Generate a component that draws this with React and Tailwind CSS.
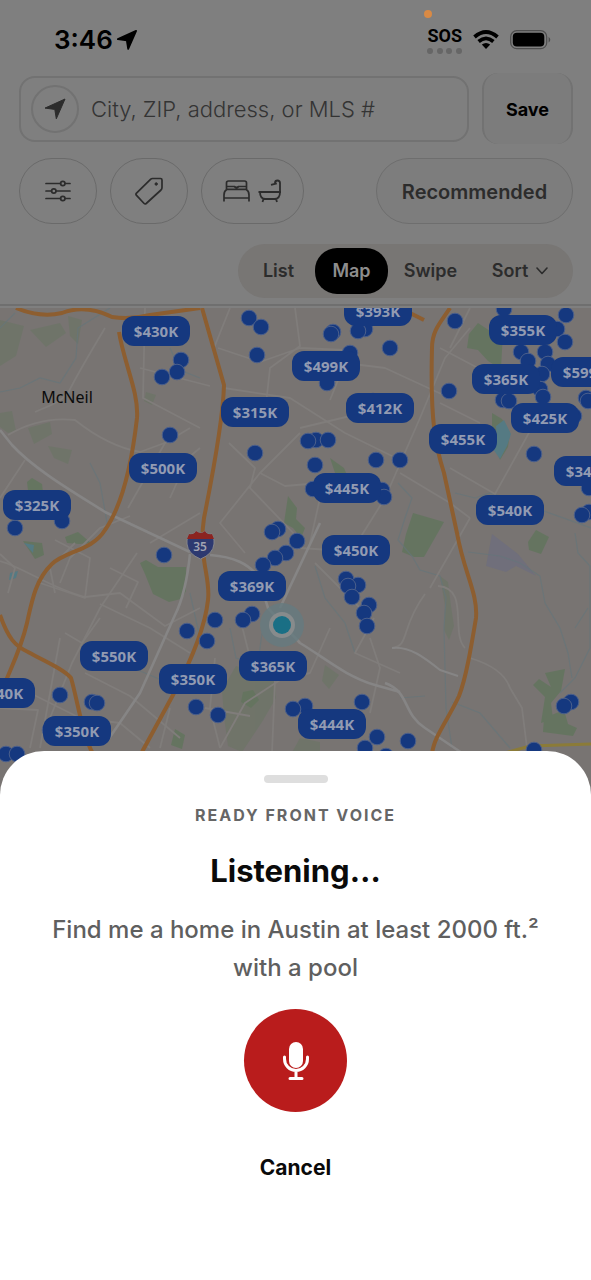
import React from 'react'

const pins = [
  { label: '$393K', x: 378, y: 3 },
  { label: '$430K', x: 156, y: 23 },
  { label: '$355K', x: 523, y: 22 },
  { label: '$499K', x: 326, y: 58 },
  { label: '$365K', x: 506, y: 71 },
  { label: '$599K', x: 585, y: 64 },
  { label: '$412K', x: 380, y: 100 },
  { label: '$315K', x: 255, y: 104 },
  { label: '$425K', x: 545, y: 110 },
  { label: '$455K', x: 463, y: 131 },
  { label: '$500K', x: 163, y: 160 },
  { label: '$349K', x: 588, y: 163 },
  { label: '$445K', x: 347, y: 180 },
  { label: '$325K', x: 37, y: 197 },
  { label: '$540K', x: 510, y: 202 },
  { label: '$450K', x: 356, y: 242 },
  { label: '$369K', x: 252, y: 278 },
  { label: '$550K', x: 114, y: 348 },
  { label: '$365K', x: 273, y: 358 },
  { label: '$350K', x: 193, y: 371 },
  { label: '$340K', x: 1, y: 385 },
  { label: '$444K', x: 332, y: 416 },
  { label: '$350K', x: 77, y: 423 },
]

const dots = [
  [181, 52], [177, 64], [162, 69], [170, 127], [62, 213], [15, 220],
  [249, 10], [261, 19], [257, 47], [333, 24], [331, 26], [365, 21], [358, 23],
  [390, 40], [350, 45], [327, 75], [373, 93], [316, 132], [308, 133], [328, 132],
  [255, 145], [315, 157], [376, 152], [400, 152], [313, 181], [382, 182], [384, 189],
  [278, 221], [272, 224], [455, 13], [504, 1], [566, 7], [557, 21], [565, 34],
  [521, 44], [528, 53], [545, 44], [548, 56], [542, 66], [540, 81], [543, 89],
  [503, 92], [509, 93], [535, 110], [550, 103], [574, 108], [534, 146], [586, 90], [588, 93],
  [589, 180], [589, 204], [582, 207], [449, 83], [164, 247], [187, 323], [60, 387],
  [92, 394], [97, 395], [196, 399], [218, 407], [6, 446], [17, 446], [50, 422],
  [297, 233], [286, 245], [275, 250], [263, 257], [252, 306], [243, 312],
  [215, 312], [207, 333], [346, 271], [358, 277], [348, 278], [352, 289],
  [369, 297], [364, 305], [367, 318], [362, 394], [305, 398], [293, 401],
  [377, 429], [365, 440], [386, 448], [408, 433], [571, 394], [564, 398], [534, 442],
]

const parks = [
  'M478 15l12 8h13l-2 38-13-8-10-11-11-2 2-14z',
  'M492 105l10 6 8 14-2 14-8 13-8-22z',
  'M140 255l6-3 12 7h28v24l-5 8-12 3-16-8-8-20z',
  'M413 205l31 9-20 35h-10l-12-5 4-18z',
  'M536 222l13 7-8 17-12-4-1-8z',
  'M288 188l9 12-1 11 9 9-4 10-8-10-9-5z',
  'M330 150l14 10 5 12-6 8-7-12z',
  'M27 174l5-4 10 6 1 9-6 3-9-6z',
  'M23 233l19 2 2 12-9 4z',
  'M65 229l13-5 13 11-12 1-12-1z',
  'M175 421l10 6-3 14-11-4z',
  'M262 254l7-5 2 8-9 4z',
  'M545 365l20-4-4 22-10 12 2 16-12 4 4-26-12-12 6-6 12 8z',
  'M544 410l20-8 4 14 9 4-4 8-30-4z',
  'M243 384l10-2 6 10-8 8-10-6z',
]

// larger, fainter patches of greenery
const meadows = [
  'M0 12l24 6-8 30-16 10z',
  'M30 22l30-7 6 10-20 14z',
  'M68 8l14 4-4 24-8-8z',
  'M28 120l22-6 2 12-18 10z',
  'M48 138l24 4-4 14-14-6z',
  'M0 105l12-2 4 20-8 2-8-6z',
  'M222 382l14-24 16 6 22-4 2 30-14 24-20 30-14-6-4-30z',
  'M300 430l20 4v14h-30z',
  'M325 357l14 10-10 14-7-8z',
  'M440 268l8 6 3 24 3 20-5 14-5-10 1-24z',
  'M146 84l10 3-4 10-8-4z',
]

const streets = [
  'M8 127Q40 108 75 112C95 128 118 140 140 144L170 133',
  'M105 20C90 45 78 65 68 85C60 95 48 98 35 104',
  'M140 60L210 78M145 0L143 90L200 120',
  'M230 0L214 40M218 40L260 54L300 40L345 42M295 0L300 38L270 60L266 96',
  'M224 80L290 90L345 125L392 148M300 125L260 165L285 178L320 175',
  'M330 92L345 55L385 60L450 90M300 120L392 98',
  'M229 135L255 160L250 180L300 232M260 165L220 215L245 245',
  'M360 230L385 190L420 110L445 50L470 20',
  'M440 95L480 115M440 40L478 60L510 70M470 0L450 40',
  'M450 160L495 186L540 105M400 165L450 195L470 210M470 210L450 245L430 280',
  'M0 190L25 152M55 232L90 250L85 290L40 275M60 275L70 250L100 220L130 208',
  'M0 253C25 260 50 280 85 289L120 285L165 318L200 300',
  'M55 285L50 260L75 235M137 245L100 300L72 355L50 410',
  'M60 330L40 440M100 296L150 320L190 345M110 260L138 274L126 300',
  'M85 365L130 388L180 430M20 380L80 410L120 415L150 440',
  'M0 400L38 402L30 440M65 325L82 335L100 310',
  'M200 205L150 235M170 190L188 150L200 140M128 200L165 135L190 120',
  'M315 255L345 285L370 310M310 235L320 190M300 240L375 245',
  'M374 310L355 345L400 365M330 320L310 365L280 372L245 395L220 440',
  'M275 372L272 445M370 330L380 360L370 405M240 310L250 350L270 365',
  'M0 246L15 260L8 285M392 340C410 338 400 320 425 286M438 278C470 280 450 325 465 340',
  'M470 350C490 356 505 365 510 380L522 400L527 440',
  'M215 350L210 400L220 440M170 400L160 440M205 400L250 408',
]

const creeks = [
  'M110 0L78 20L76 50L60 75L40 70L20 80L0 84',
  'M0 20L15 5M90 155L100 175L108 220M170 40L180 62L200 70',
  'M398 175L412 190L405 210L398 232L412 248L420 262L440 268L446 290L444 320L446 400L452 440',
  'M400 390L425 388M455 185L475 190L490 185L530 198L591 220',
  'M468 244L500 248L520 255L540 268L545 295L560 320L568 345L572 370',
  'M575 225L578 245L590 258L590 340L575 370L560 385M588 300L575 320',
  'M315 258L325 290L345 315L355 345M230 320L236 350L258 355L262 325',
  'M452 394L480 405L510 440M120 355L145 365L180 380M190 285L200 330',
]

const highways = [
  'M16 0Q40 10 62 5Q85 -4 112 9Q130 12 150 7L200 0',
  'M119 24C124 55 139 85 137 110C133 145 124 195 105 222C92 243 65 243 52 256C36 271 32 292 27 315C20 345 8 365 0 388',
  'M202 0L224 77Q223 115 204 210C198 250 211 270 208 292C205 320 190 355 173 387L142 444',
  'M450 0C441 14 432 22 432 40C430 115 436 140 444 165L457 225C464 265 478 285 476 310C471 340 466 370 459 388C448 412 434 428 432 446',
  'M0 307C8 330 15 338 28 344C48 355 65 362 71 370C77 390 82 425 92 444',
  'M408 4L424 12',
]

function MapCanvas() {
  return (
    <svg className="absolute inset-0 h-full w-full" aria-hidden="true">
      <g fill="#5f755b" opacity="0.75">
        {parks.map((d) => (
          <path key={d} d={d} />
        ))}
      </g>
      <g fill="#657560" opacity="0.45">
        {meadows.map((d) => (
          <path key={d} d={d} />
        ))}
      </g>
      <g fill="#557a83">
        <path d="M496 118l8-6 7 14-4 12-7 13-7-10 4-8z" />
        <path d="M24 235l10 2-1 8zM10 214l6 3-4 5zM10 265l8-2-2 7-7 2zM188 362l4 3-3 3z" />
      </g>
      <path d="M492 226l26 20 18 22-20-10-10 6-20-6z" fill="#706f7b" />
      <g fill="none" stroke="#66767b" strokeWidth="1.2" opacity="0.7">
        {creeks.map((d) => (
          <path key={d} d={d} />
        ))}
      </g>
      <g fill="none" stroke="#807d7b" strokeWidth="1.8" strokeLinejoin="round">
        {streets.map((d) => (
          <path key={d} d={d} />
        ))}
      </g>
      <g fill="none" stroke="#868585" strokeWidth="2.6" strokeLinejoin="round">
        <path d="M0 122L12 137C35 162 75 185 105 204L190 244" />
        <path d="M210 247C235 249 248 256 258 268L268 300L300 335C325 350 345 368 375 377L400 384" />
        <path d="M385 375C410 384 402 405 425 420L462 445" />
        <path d="M320 215L280 300M190 246Q186 285 175 307L140 385L108 432" />
        <path d="M392 340C410 338 425 350 440 362L458 368" strokeWidth="2" />
      </g>
      <path d="M505 445L530 438L591 436" fill="none" stroke="#8b7b38" strokeWidth="3" />
      <g fill="none" stroke="#8d5e30" strokeWidth="4" strokeLinejoin="round">
        {highways.map((d) => (
          <path key={d} d={d} />
        ))}
      </g>
      <g transform="translate(187 223)">
        <path d="M2 3Q7 4 9 0Q14 4 18 0Q20 4 25 3L27 9V13Q26 23 13.500 28Q1 23 0 13V9Z" fill="#2d3970" stroke="#85858a" />
        <path d="M2 3Q7 4 9 0Q14 4 18 0Q20 4 25 3L27 8H0Z" fill="#8c2420" />
      </g>
      <text x="200" y="243" textAnchor="middle" fill="#a2a4b2" className="font-['Noto_Sans',sans-serif] text-xs font-semibold">35</text>
      <text x="67" y="95" textAnchor="middle" fill="#0b0b0b" className="font-['Noto_Sans',sans-serif] text-base">McNeil</text>
      <circle cx="282" cy="317" r="22" fill="#657a80" opacity="0.8" />
      <circle cx="282" cy="317" r="13" fill="#878b8c" />
      <circle cx="282" cy="317" r="9" fill="#1a6f85" />
      <g fill="#15387f" stroke="#4b5f8b" strokeWidth="1">
        {dots.map(([x, y]) => (
          <circle key={`${x}-${y}`} cx={x} cy={y} r="7.800" />
        ))}
      </g>
    </svg>
  )
}

function ArrowIcon({ className }) {
  return (
    <svg viewBox="0 0 22 22" className={className} fill="currentColor" stroke="currentColor" strokeLinejoin="round" aria-hidden="true">
      <path d="M21 1L12.300 20.800L10.800 11.400L1 10.100Z" />
    </svg>
  )
}

function StatusBar() {
  return (
    <div className="flex h-[73px] items-start justify-between pt-6 pr-10 pl-[54px] text-black">
      <div className="flex items-center gap-1 text-[26px] leading-8 font-semibold">
        3:46
        <ArrowIcon className="h-5 w-5 stroke-2" />
      </div>
      <div className="flex items-start gap-[11px]">
        <div className="relative">
          <span className="absolute -top-3.5 left-[-3px] h-2 w-2 rounded-full bg-[#d98a45]" />
          <div className="font-['Liberation_Sans_Narrow','Roboto',sans-serif] text-lg leading-6 font-bold">SOS</div>
          <div className="flex justify-between">
            <span className="h-1.5 w-1.5 rounded-full bg-[#666]" />
            <span className="h-1.5 w-1.5 rounded-full bg-[#666]" />
            <span className="h-1.5 w-1.5 rounded-full bg-[#666]" />
            <span className="h-1.5 w-1.5 rounded-full bg-[#666]" />
          </div>
        </div>
        <svg viewBox="0 0 26 20" className="mt-1.5 h-5 w-[26px]" fill="none" stroke="#000" strokeWidth="3.800" aria-hidden="true">
          <path d="M1.500 7Q13 -3 24.500 7" />
          <path d="M5.600 11.500Q13 5.300 20.400 11.500" />
          <path d="M8.800 14.600Q13 11.300 17.200 14.600L13 19Z" fill="#000" stroke="none" />
        </svg>
        <svg viewBox="0 0 41 20" className="mt-1.5 h-5 w-[41px]" aria-hidden="true">
          <rect x="0.700" y="0.700" width="36" height="18" rx="6" fill="none" stroke="#4d4d4d" strokeWidth="1.200" />
          <rect x="2.800" y="2.800" width="31.500" height="13.800" rx="4" fill="#000" />
          <path d="M38.600 6.800Q42 9.700 38.600 12.600Z" fill="#4d4d4d" />
        </svg>
      </div>
    </div>
  )
}

function Header() {
  return (
    <header className="border-b-2 border-[#6f6f6f] bg-[#7f7f7f] pb-1.5">
      <StatusBar />
      <div className="flex items-center gap-[13px] pr-[18px] pl-[19px]">
        <label className="flex h-[66px] min-w-0 flex-1 items-center gap-3 rounded-2xl border-2 border-[#727272] px-2.5">
          <span className="flex h-12 w-12 shrink-0 items-center justify-center rounded-full border-2 border-[#727272] text-[#2c2c2c]">
            <ArrowIcon className="h-[22px] w-[22px] stroke-1" />
          </span>
          <input
            type="text"
            aria-label="Search"
            placeholder="City, ZIP, address, or MLS #"
            className="w-full min-w-0 bg-transparent pt-0.5 text-[22px] font-light text-black outline-none placeholder:text-[#343434]"
          />
        </label>
        <button className="h-[71px] w-[91px] rounded-2xl border-x-2 border-[#727272] bg-[#7c7c7c] pt-0.5 text-lg font-bold text-black">Save</button>
      </div>

      <div className="mt-3.5 flex gap-[13px] pr-[18px] pl-[19px] text-[#2c2c2c]">
        <button aria-label="Filters" className="flex h-[66px] w-[78px] items-center justify-center rounded-full border border-[#6a6a6a]">
          <svg viewBox="0 0 26 22" className="h-[22px] w-[26px]" fill="none" stroke="currentColor" strokeWidth="1.700" strokeLinecap="round">
            <path d="M1 3.500h14.500M20 3.500h5M1 11h5.500M11 11h14M1 18.500h14.500M20 18.500h5" />
            <circle cx="17.800" cy="3.500" r="2.200" />
            <circle cx="8.800" cy="11" r="2.200" />
            <circle cx="17.800" cy="18.500" r="2.200" />
          </svg>
        </button>
        <button aria-label="Price" className="flex h-[66px] w-[78px] items-center justify-center rounded-full border border-[#6a6a6a]">
          <svg viewBox="0 0 28 28" className="h-7 w-7" fill="none" stroke="currentColor" strokeWidth="1.700" strokeLinejoin="round">
            <path d="M17.500 1.500H25.500Q27 1.500 27 3V10.500Q27 12 26 13L11.200 26.500Q10 27.500 8.900 26.300L1.300 18.200Q.500 17.200 1.500 16.200L15.500 2.300Q16.300 1.500 17.500 1.500Z" />
            <circle cx="21.200" cy="7" r="1.200" fill="currentColor" strokeWidth="1" />
          </svg>
        </button>
        <button aria-label="Beds and baths" className="flex h-[66px] w-[103px] items-center justify-center gap-2 rounded-full border border-[#6a6a6a]">
          <svg viewBox="0 0 27 22" className="h-[22px] w-[27px]" fill="none" stroke="currentColor" strokeWidth="1.700" strokeLinejoin="round">
            <path d="M3.500 9V3Q3.500 1 5.500 1H21.500Q23.500 1 23.500 3V9M3.500 6.500H11.300Q13.500 8.500 15.700 6.500H23.500M4 9.300H23Q26 11 26 15V21.500M4 9.300Q1 11 1 15V21.500M1 18H26" />
          </svg>
          <svg viewBox="0 0 24 24" className="h-6 w-6" fill="none" stroke="currentColor" strokeWidth="1.800" strokeLinejoin="round">
            <path d="M.500 13H23M2 13Q2 20 7.500 20H16.500Q22 20 22 13V4Q22 1.500 19.500 1.500Q17 1.500 17 4M13 5.800L18.800 4.300M5.500 20L4.500 23M18 20L19 23" />
          </svg>
        </button>
        <button className="ml-auto h-[66px] w-[197px] rounded-full border border-[#6e6e6e] bg-[#7d7d7d] pt-0.5 text-[20px] font-semibold">Recommended</button>
      </div>

      <div className="mt-5 flex pr-[18px]">
        <div className="ml-auto flex h-[54px] w-[335px] items-center rounded-full bg-[#787674] text-lg font-semibold text-[#2c2c2c]">
          <button className="w-[77px] pl-1">List</button>
          <button className="h-[46px] w-[73px] rounded-[22px] bg-black text-[#8d8d8d]">Map</button>
          <button className="w-[85px]">Swipe</button>
          <button className="flex flex-1 items-center justify-center gap-2 pr-1.5">
            Sort
            <svg viewBox="0 0 12 8" className="h-2 w-3" fill="none" stroke="currentColor" strokeWidth="1.600" strokeLinecap="round" strokeLinejoin="round">
              <path d="M1 1l5 5.500L11 1" />
            </svg>
          </button>
        </div>
      </div>
    </header>
  )
}

function VoiceSheet() {
  return (
    <section className="relative -mt-10 flex flex-col items-center rounded-t-[44px] bg-white px-8 pt-6 pb-24 text-center">
      <div className="h-2 w-16 rounded-full bg-[#dedede]" />
      <p className="mt-5 text-base leading-6 font-bold tracking-[2px] text-[#666]">READY FRONT VOICE</p>
      <h1 className="mt-6 text-[31px] leading-10 font-bold text-[#0a0a0a]">Listening…</h1>
      <p className="mt-5 text-2xl leading-[38px] font-medium text-[#5f5f5f]">
        Find me a home in Austin at least 2000 ft.² <br />
        with a pool
      </p>
      <button aria-label="Stop listening" className="mt-[22px] flex h-[103px] w-[103px] items-center justify-center rounded-full bg-[#b91c1c]">
        <svg viewBox="0 0 28 40" className="h-10 w-7" fill="none" stroke="#fff" strokeWidth="3" strokeLinecap="round">
          <rect x="7" y="1" width="14" height="26" rx="7" fill="#fff" stroke="none" />
          <path d="M2.500 16V18A11.500 11.500 0 0 0 25.500 18V16M14 30V37M8 37.500H20" />
        </svg>
      </button>
      <button className="mt-10 text-[21px] leading-8 font-bold text-[#0a0a0a]">Cancel</button>
    </section>
  )
}

export default function App() {
  return (
    <div className="flex min-h-screen flex-col overflow-hidden bg-[#7f7f7f] font-['Inter',sans-serif]">
      <Header />
      <main className="relative mt-0.5 min-h-[400px] flex-1 overflow-hidden bg-[#787472]">
        <MapCanvas />
        {pins.map((pin) => (
          <button
            key={`${pin.label}-${pin.x}`}
            className="absolute h-[30px] w-[68px] -translate-x-1/2 -translate-y-1/2 rounded-xl bg-[#15387f] font-['Noto_Sans',sans-serif] text-[15px] font-bold text-[#929bb2]"
            style={{ left: pin.x, top: pin.y }}
          >
            {pin.label}
          </button>
        ))}
      </main>
      <VoiceSheet />
    </div>
  )
}
